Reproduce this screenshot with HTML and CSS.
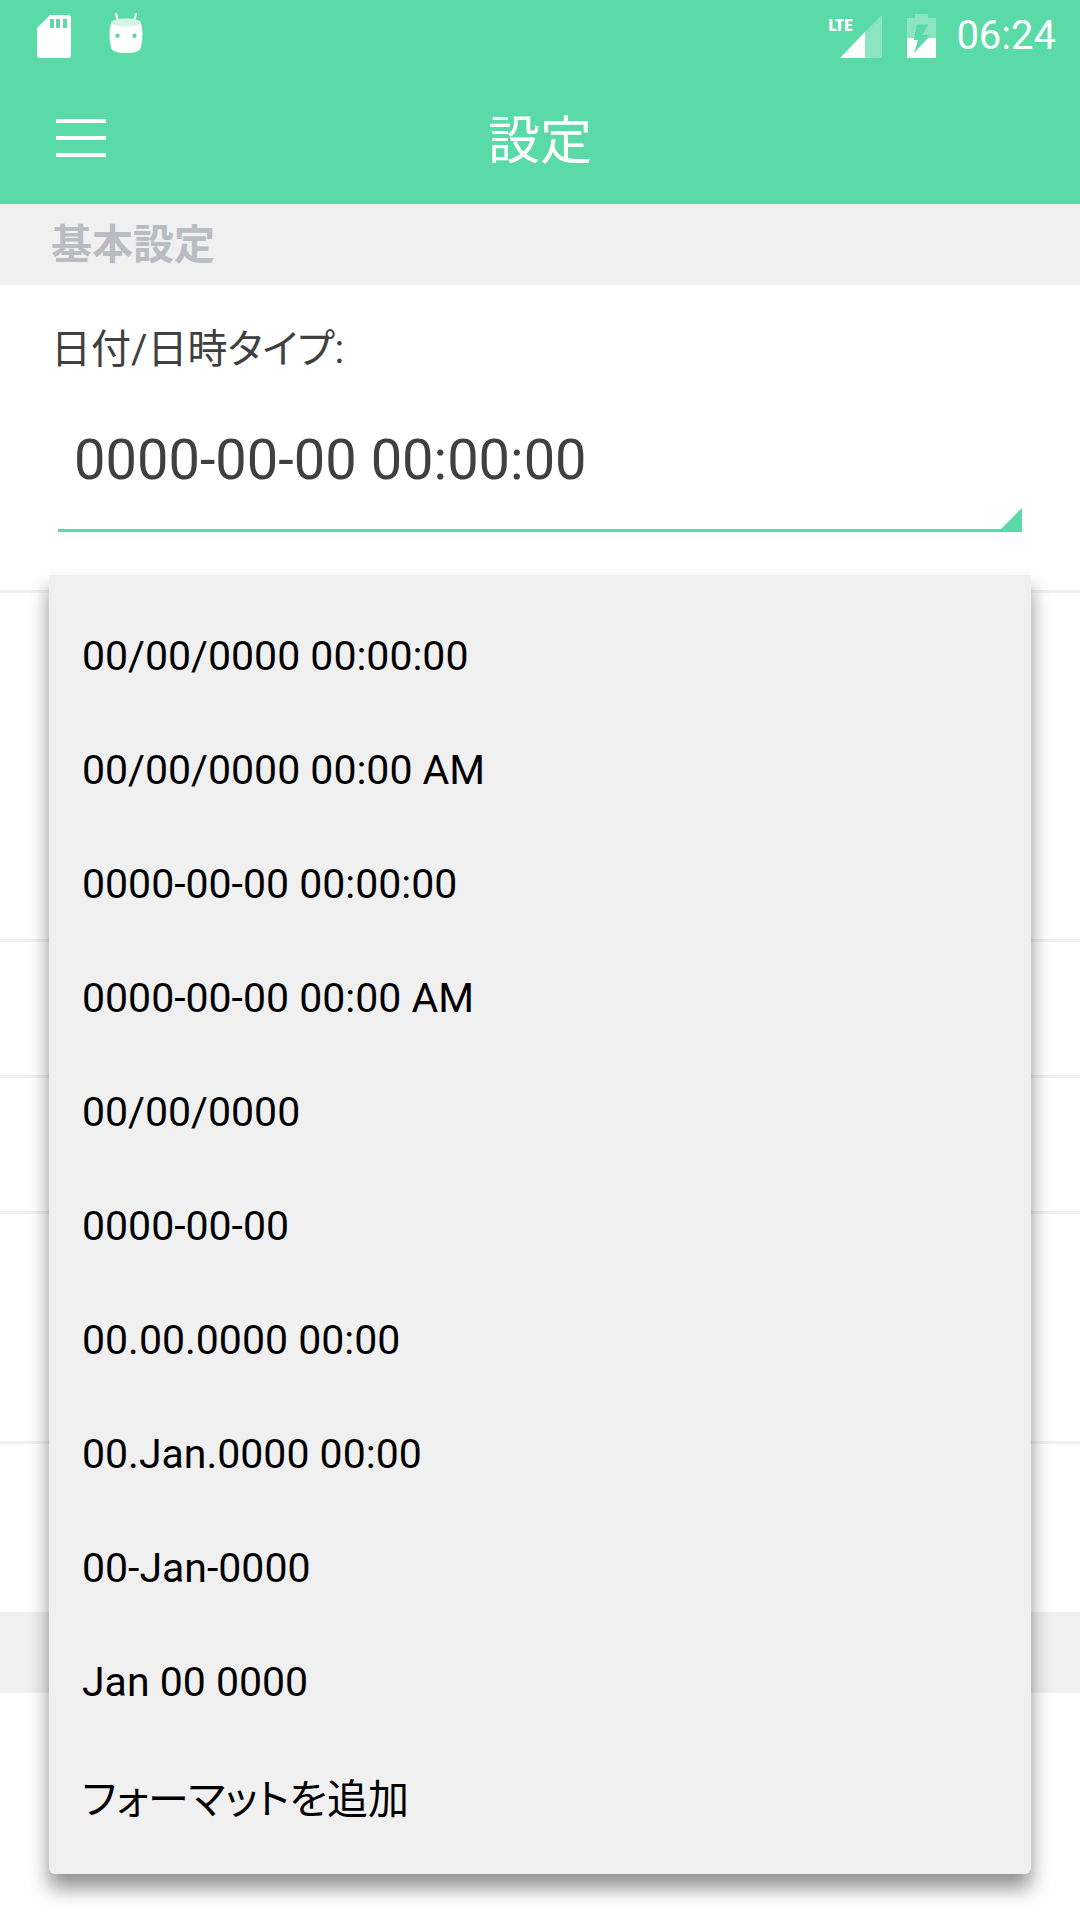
FILE: index.html
```html
<!DOCTYPE html>
<html lang="ja">
<head>
<meta charset="utf-8">
<meta name="viewport" content="width=device-width, initial-scale=1">
<title>設定</title>
<link rel="stylesheet" href="styles.css">
</head>
<body>
<header class="top">
  <div class="status">
    <svg class="status-sd" viewBox="0 0 34 43" aria-hidden="true"><path fill="#fff" fill-rule="evenodd" d="M13 0H31Q34 0 34 3V40Q34 43 31 43H3Q0 43 0 40V13ZM13 4V13H17V4ZM19 4V13H23V4ZM26 4V13H30V4Z"/></svg>
    <svg class="status-droid" viewBox="0 0 34 42" aria-hidden="true">
      <path stroke="#fff" stroke-width="2" stroke-linecap="round" d="M7 2L9 9M27 2L25 9"/>
      <path fill="#fff" fill-rule="evenodd" d="M2 11Q17 17 32 11Q35 22 32 35Q31 41 17 41Q3 41 2 35Q-1 22 2 11ZM8.500 21.500a2.200 2.200 0 1 0 0 4.400a2.200 2.200 0 1 0 0-4.400ZM25.500 21.500a2.200 2.200 0 1 0 0 4.400a2.200 2.200 0 1 0 0-4.400Z"/>
      <ellipse cx="17" cy="10.500" rx="15" ry="4" fill="#d3f5e6"/>
    </svg>
    <span class="status-net">
      <span class="status-lte">LTE</span>
      <svg class="status-signal" viewBox="0 0 42 43" aria-hidden="true"><path fill="#fff" fill-opacity=".3" d="M42 0V43H25V17Z"/><path fill="#fff" d="M25 17V43H0Z"/></svg>
    </span>
    <svg class="status-battery" viewBox="0 0 29 44" aria-hidden="true">
      <path fill="#fff" fill-opacity=".3" fill-rule="evenodd" d="M8 0H21V4H29V24H19L24 21H15.500L21 10.500H10L7 24H0V4H8Z"/>
      <path fill="#fff" d="M0 24H7L6.500 26H11L7 39L21 24H29V44H0Z"/>
    </svg>
    <time class="status-time">06:24</time>
  </div>
  <div class="bar">
    <button class="menu" type="button" aria-label="メニュー">
      <svg class="menu-icon" viewBox="0 0 50 38" aria-hidden="true"><path fill="#fff" d="M0 0H50V4H0ZM0 17H50V21H0ZM0 34H50V38H0Z"/></svg>
    </button>
    <h1 class="title">設定</h1>
  </div>
</header>
<main>
  <h2 class="section">基本設定</h2>
  <div class="row row-format">
    <label class="label" for="format">日付/日時タイプ:</label>
    <div class="spinner">
      <select class="select" id="format">
        <option>0000-00-00 00:00:00</option>
      </select>
      <svg class="corner" viewBox="0 0 22 22" aria-hidden="true"><path fill="#5adaa6" d="M22 0V22H0Z"/></svg>
      <div class="popup" role="listbox" aria-label="日付/日時タイプ">
        <button class="option" type="button" role="option">00/00/0000 00:00:00</button>
        <button class="option" type="button" role="option">00/00/0000 00:00 AM</button>
        <button class="option" type="button" role="option" aria-selected="true">0000-00-00 00:00:00</button>
        <button class="option" type="button" role="option">0000-00-00 00:00 AM</button>
        <button class="option" type="button" role="option">00/00/0000</button>
        <button class="option" type="button" role="option">0000-00-00</button>
        <button class="option" type="button" role="option">00.00.0000 00:00</button>
        <button class="option" type="button" role="option">00.Jan.0000 00:00</button>
        <button class="option" type="button" role="option">00-Jan-0000</button>
        <button class="option" type="button" role="option">Jan 00 0000</button>
        <button class="option" type="button" role="option">フォーマットを追加</button>
      </div>
    </div>
  </div>
  <div class="row row-tall"></div>
  <div class="row row-short"></div>
  <div class="row row-short"></div>
  <div class="row row-medium"></div>
  <div class="row row-last"></div>
  <div class="section"></div>
</main>
</body>
</html>
```

FILE: styles.css
```css
* { box-sizing: border-box; }

body {
  min-height: 100vh;
  margin: 0;
  background: #fff;
  color: #404040;
  font-family: Roboto, "Noto Sans CJK JP", sans-serif;
  font-size: 41px;
  font-feature-settings: "palt";
}

.top { background: #5adaa6; color: #fff; }

.status {
  display: flex;
  align-items: center;
  height: 72px;
  padding: 0 24px 0 37px;
}
.status-sd { width: 34px; height: 43px; margin-right: 38px; }
.status-droid { width: 34px; height: 42px; margin-bottom: 6px; }
.status-net { position: relative; margin-left: auto; padding-left: 12px; }
.status-lte {
  position: absolute;
  top: 0;
  left: 0;
  font: 900 17px/20px "Roboto Condensed", "Open Sans Condensed", Lato, sans-serif;
}
.status-signal { display: block; width: 42px; height: 43px; }
.status-battery { width: 29px; height: 44px; margin: 0 20px 0 25px; }
.status-time { font-size: 40px; line-height: 48px; }

.bar {
  display: grid;
  grid-template-columns: 162px 1fr 162px;
  align-items: center;
  height: 132px;
}
.menu {
  height: 132px;
  padding: 0 56px;
  border: 0;
  background: none;
}
.menu-icon { display: block; width: 50px; height: 38px; }
.title {
  margin: 0;
  padding-top: 8px;
  font-size: 52px;
  font-weight: 400;
  line-height: 72px;
  text-align: center;
}

.section {
  height: 81px;
  margin: 0;
  padding: 0 51px;
  background: #f0f0f0;
  color: #b9bcc2;
  font-size: 41px;
  font-weight: 700;
  line-height: 83px;
}

.row { border-bottom: 3px solid #f0f0f0; }
.row-format { padding: 37px 51px 58px; }
.row-tall { min-height: 349px; }
.row-short { min-height: 136px; }
.row-medium { min-height: 230px; }
.row-last { min-height: 168px; border: 0; }

.label { display: block; font-size: 40px; line-height: 56px; }

.spinner { position: relative; margin: 31px 7px 0; }
.select {
  display: block;
  width: 100%;
  height: 123px;
  padding: 0 16px 18px;
  border: 0;
  border-bottom: 3px solid #5adaa6;
  border-radius: 0;
  background: none;
  appearance: none;
  color: inherit;
  font: inherit;
  font-size: 56px;
}
.corner { position: absolute; right: 0; bottom: 0; width: 24px; height: 24px; }

.popup {
  position: absolute;
  top: 100%;
  left: -9px;
  right: -9px;
  margin-top: 43px;
  padding: 24px 0 21px;
  border-radius: 0 0 6px 6px;
  background: #f0f0f0;
  box-shadow: 0 14px 20px rgba(0, 0, 0, .44);
}
.option {
  display: block;
  width: 100%;
  height: 114px;
  padding: 0 33px;
  border: 0;
  background: none;
  color: #000;
  font: inherit;
  font-feature-settings: inherit;
  text-align: left;
}
```
